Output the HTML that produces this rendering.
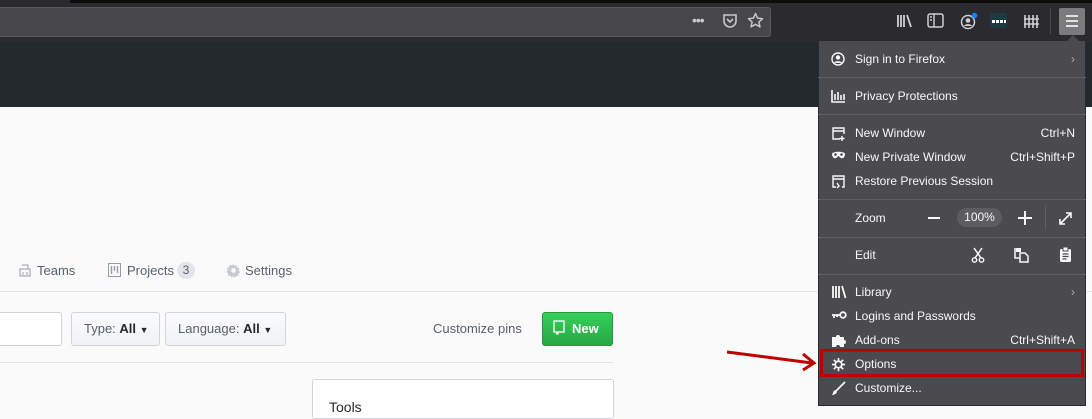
<!DOCTYPE html>
<html><head><meta charset="utf-8"><style>
*{box-sizing:border-box;margin:0;padding:0}
body{width:1092px;height:406px;overflow:hidden;position:relative;background:#fafafa;font-family:"Liberation Sans",sans-serif}
.abs{position:absolute}
.mi{position:absolute;left:818px;width:268px;height:24px;color:#f9f9fa;font-size:12px;line-height:24px;margin-top:1px}
.mi .t{position:absolute;left:37px}
.mi .k{position:absolute;right:11px}
.mi svg{position:absolute;left:13px;top:5px}
.sep{position:absolute;left:818px;width:268px;height:1px;background:#5f5f63}
.btn{position:absolute;top:312px;height:34px;border:1px solid #d1d5da;border-radius:3px;background:linear-gradient(#fafbfc,#eff3f6);font-size:13px;color:#586069;line-height:32px;padding-left:12px}
.btn b{color:#24292e}
.dot{position:absolute;width:3px;height:3px;background:#fff;top:20px}
</style></head><body>
<div class="abs" style="left:0;top:0;width:1092px;height:42px;background:#2b2a2f"></div>
<div class="abs" style="left:70px;top:0;width:1022px;height:3px;background:#0c0c0d"></div>
<div class="abs" style="left:0;top:7px;width:771px;height:30px;background:#474749;border:1px solid #5a5a5e;border-left:none;border-radius:0 3px 3px 0"></div>
<div class="abs" style="left:692px;top:12px;color:#c8c8cc;font-size:14px;letter-spacing:-1px">•••</div>
<svg class="abs" style="left:722px;top:13px" width="16" height="16" viewBox="0 0 16 16"><path d="M2 2h12v6a6 6 0 0 1-12 0z" fill="none" stroke="#c8c8cc" stroke-width="1.6"/><path d="M5 6l3 3 3-3" fill="none" stroke="#c8c8cc" stroke-width="1.6"/></svg>
<svg class="abs" style="left:747px;top:12px" width="17" height="17" viewBox="0 0 16 16"><path d="M8 1.5l2 4.3 4.6.5-3.4 3.1 1 4.6L8 11.6 3.8 14l1-4.6L1.4 6.3 6 5.8z" fill="none" stroke="#c8c8cc" stroke-width="1.4" stroke-linejoin="round"/></svg>
<svg class="abs" style="left:896px;top:13px" width="18" height="16" viewBox="0 0 18 16"><path d="M2 2v12M5 2v12M8 2v12M11 2l4 12" stroke="#d0d0d4" stroke-width="1.8" fill="none"/></svg>
<svg class="abs" style="left:927px;top:13px" width="17" height="15" viewBox="0 0 17 15"><rect x="1" y="1" width="15" height="13" rx="2" fill="none" stroke="#d0d0d4" stroke-width="1.5"/><path d="M7 1v13M3 4h2M3 7h2" stroke="#d0d0d4" stroke-width="1.4"/></svg>
<svg class="abs" style="left:960px;top:12px" width="18" height="18" viewBox="0 0 18 18"><circle cx="8" cy="10" r="6.5" fill="none" stroke="#d0d0d4" stroke-width="1.5"/><circle cx="8" cy="8.5" r="2.3" fill="#d0d0d4"/><path d="M4 14c1-2.5 7-2.5 8 0" fill="#d0d0d4"/><circle cx="14.5" cy="3.5" r="2.8" fill="#0a84ff"/></svg>
<div class="abs" style="left:990px;top:13px;width:17px;height:15px;background:#1c3a44"></div>
<div class="dot" style="left:992px"></div><div class="dot" style="left:996px"></div><div class="dot" style="left:1000px"></div><div class="dot" style="left:1004px;width:2px"></div>
<svg class="abs" style="left:1023px;top:13px" width="17" height="16" viewBox="0 0 17 16"><path d="M2 2v13M6 2v13M10 2v13M14 2v13M1 6h15M1 11h15" stroke="#d0d0d4" stroke-width="1.6"/></svg>
<div class="abs" style="left:1050px;top:8px;width:1px;height:26px;background:#4a4a4f"></div>
<div class="abs" style="left:1059px;top:8px;width:26px;height:27px;background:#7b7b7e;border-radius:2px"></div>
<svg class="abs" style="left:1064px;top:14px" width="16" height="14" viewBox="0 0 16 14"><path d="M2 2h12M2 7h12M2 12h12" stroke="#f0f0f0" stroke-width="1.8"/></svg>
<div class="abs" style="left:0;top:42px;width:1092px;height:65px;background:#24292e"></div>
<svg class="abs" style="left:19px;top:264px" width="12" height="13" viewBox="0 0 12 13"><rect x="1" y="5" width="10" height="7" fill="none" stroke="#959da5"/><path d="M3 1h6v4M4 8v3M8 8v3" stroke="#959da5" fill="none"/></svg>
<div class="abs" style="left:37px;top:263px;font-size:13px;color:#586069">Teams</div>
<svg class="abs" style="left:108px;top:263px" width="13" height="14" viewBox="0 0 13 14"><rect x="0.5" y="0.5" width="12" height="13" fill="none" stroke="#959da5"/><path d="M3.5 3v8M6.5 3v5M9.5 3v7" stroke="#959da5" stroke-width="1.4"/></svg>
<div class="abs" style="left:127px;top:263px;font-size:13px;color:#586069">Projects</div>
<div class="abs" style="left:177px;top:262px;width:18px;height:17px;background:#e1e4e8;border-radius:9px;font-size:12px;color:#586069;text-align:center;line-height:17px">3</div>
<svg class="abs" style="left:226px;top:263px" width="15" height="15" viewBox="0 0 16 16"><path d="M8 1l1.3 2.1 2.4-.6.5 2.4 2.3 1-.9 2.2 1.5 1.9-2 1.4.1 2.5-2.5-.1L9.3 16 8 14l-1.9 1.5-1.3-2.1-2.5.2.1-2.5-2-1.4L1.9 7.5 1 5.4l2.3-1 .5-2.4 2.4.6z" fill="#c6cbd1"/><circle cx="8" cy="8" r="2.5" fill="#fafafa"/></svg>
<div class="abs" style="left:245px;top:263px;font-size:13px;color:#586069">Settings</div>
<div class="abs" style="left:0;top:291px;width:1092px;height:1px;background:#e1e4e8"></div>
<div class="abs" style="left:-5px;top:312px;width:67px;height:34px;border:1px solid #d1d5da;border-radius:3px;background:#fff"></div>
<div class="btn" style="left:71px;width:89px">Type: <b>All</b> <span style="font-size:9px;color:#24292e">▼</span></div>
<div class="btn" style="left:165px;width:121px">Language: <b>All</b> <span style="font-size:9px;color:#24292e">▼</span></div>
<div class="abs" style="left:433px;top:321px;font-size:13px;color:#586069">Customize pins</div>
<div class="abs" style="left:542px;top:312px;width:71px;height:34px;background:linear-gradient(#34d058,#28a745);border:1px solid #26983f;border-radius:3px;color:#fff;font-weight:bold;font-size:13px;line-height:32px;padding-left:29px">New</div>
<svg class="abs" style="left:553px;top:320px" width="12" height="16" viewBox="0 0 12 16"><rect x="1" y="1" width="10" height="11" fill="none" stroke="#fff" stroke-width="1.3"/><path d="M3 12v3l1.3-1 1.3 1v-3" fill="#fff"/></svg>
<div class="abs" style="left:0;top:362px;width:613px;height:1px;background:#e1e4e8"></div>
<div class="abs" style="left:312px;top:379px;width:302px;height:40px;border:1px solid #d1d5da;border-radius:3px;background:#fff"></div>
<div class="abs" style="left:329px;top:399px;font-size:14px;color:#24292e">Tools</div>
<svg class="abs" style="left:720px;top:340px" width="100" height="35" viewBox="0 0 100 35"><path d="M7 12L92 23" stroke="#c00000" stroke-width="3"/><path d="M83 14L94 23 83 30" fill="none" stroke="#c00000" stroke-width="3"/></svg>
<div class="abs" style="left:818px;top:40px;width:268px;height:366px;background:#4a4a4f;border:1px solid #2a2a2e"></div>
<div class="abs" style="left:1067px;top:35px;width:0;height:0;border-left:6px solid transparent;border-right:6px solid transparent;border-bottom:6px solid #4a4a4f"></div>
<div class="mi" style="top:46px"><svg width="14" height="14" viewBox="0 0 14 14"><circle cx="7" cy="7" r="6" fill="none" stroke="#f9f9fa" stroke-width="1.4"/><circle cx="7" cy="5.5" r="2.2" fill="#f9f9fa"/><path d="M3 11c1-2.5 7-2.5 8 0" fill="#f9f9fa"/></svg><span class="t">Sign in to Firefox</span><span class="k" style="color:#b1b1b3">›</span></div>
<div class="sep" style="top:77px"></div>
<div class="mi" style="top:83px"><svg width="15" height="14" viewBox="0 0 15 14"><path d="M1 1v12h13M4 5v6M7 3v8M10 6v5M13 5v6" stroke="#f9f9fa" stroke-width="1.6" fill="none"/></svg><span class="t">Privacy Protections</span></div>
<div class="sep" style="top:114px"></div>
<div class="mi" style="top:120px"><svg width="15" height="15" viewBox="0 0 15 15"><path d="M9 13H2V2h11v6M2 5h11M11 10v5M8.5 12.5h5" stroke="#f9f9fa" stroke-width="1.4" fill="none"/></svg><span class="t">New Window</span><span class="k">Ctrl+N</span></div>
<div class="mi" style="top:144px"><svg width="15" height="12" viewBox="0 0 15 12"><path d="M1 4c0-3 13-3 13 0s-2 5-4 4-2-2-2.5-2-.5 1-2.5 2S1 7 1 4z" fill="#f9f9fa"/><circle cx="4.5" cy="4.5" r="1.3" fill="#4a4a4f"/><circle cx="10.5" cy="4.5" r="1.3" fill="#4a4a4f"/></svg><span class="t">New Private Window</span><span class="k">Ctrl+Shift+P</span></div>
<div class="mi" style="top:168px"><svg width="15" height="15" viewBox="0 0 15 15"><path d="M5 13H2V2h11v11h-2M2 5h11M6 9l2 3-2 2" stroke="#f9f9fa" stroke-width="1.4" fill="none"/></svg><span class="t">Restore Previous Session</span></div>
<div class="sep" style="top:199px"></div>
<div class="mi" style="top:205px"><span class="t">Zoom</span></div>
<div class="abs" style="left:928px;top:217px;width:12px;height:2px;background:#f9f9fa"></div>
<div class="abs" style="left:957px;top:208px;width:45px;height:19px;border-radius:10px;background:#5c5c61;color:#f9f9fa;font-size:12px;text-align:center;line-height:19px">100%</div>
<div class="abs" style="left:1018px;top:217px;width:14px;height:2px;background:#f9f9fa"></div>
<div class="abs" style="left:1024px;top:211px;width:2px;height:14px;background:#f9f9fa"></div>
<div class="abs" style="left:1045px;top:206px;width:1px;height:24px;background:#5f5f63"></div>
<svg class="abs" style="left:1058px;top:211px" width="15" height="15" viewBox="0 0 15 15"><path d="M2 13L13 2M8 2h5v5M2 8v5h5" stroke="#f9f9fa" stroke-width="1.6" fill="none"/></svg>
<div class="sep" style="top:237px"></div>
<div class="mi" style="top:242px"><span class="t">Edit</span></div>
<svg class="abs" style="left:971px;top:247px" width="14" height="16" viewBox="0 0 14 16"><path d="M3 1l7 10M11 1L4 11" stroke="#f9f9fa" stroke-width="1.5"/><circle cx="3.5" cy="13" r="2.2" fill="none" stroke="#f9f9fa" stroke-width="1.4"/><circle cx="10.5" cy="13" r="2.2" fill="none" stroke="#f9f9fa" stroke-width="1.4"/></svg>
<svg class="abs" style="left:1014px;top:247px" width="15" height="16" viewBox="0 0 15 16"><path d="M2 1h5v4H2z" fill="#f9f9fa"/><path d="M1 1v10h5" stroke="#f9f9fa" stroke-width="1.5" fill="none"/><path d="M6 6h5l3 3v6H6z" fill="none" stroke="#f9f9fa" stroke-width="1.5"/></svg>
<svg class="abs" style="left:1059px;top:246px" width="13" height="17" viewBox="0 0 13 17"><rect x="1" y="3" width="11" height="13" rx="1.5" fill="#f9f9fa"/><rect x="4" y="1" width="5" height="4" fill="#f9f9fa" stroke="#4a4a4f"/><path d="M3.5 8h6M3.5 10.5h6M3.5 13h4" stroke="#4a4a4f" stroke-width="1.2"/></svg>
<div class="sep" style="top:274px"></div>
<div class="mi" style="top:279px"><svg width="16" height="14" viewBox="0 0 16 14"><path d="M2 1v12M5 1v12M8 1v12M11 1l3.5 12" stroke="#f9f9fa" stroke-width="1.8" fill="none"/></svg><span class="t">Library</span><span class="k" style="color:#b1b1b3">›</span></div>
<div class="mi" style="top:303px"><svg width="16" height="12" viewBox="0 0 16 12"><path d="M1 6h8M3 6v3M6 6v2" stroke="#f9f9fa" stroke-width="1.8" fill="none"/><circle cx="12" cy="6" r="2.8" fill="none" stroke="#f9f9fa" stroke-width="1.8"/></svg><span class="t">Logins and Passwords</span></div>
<div class="mi" style="top:327px"><svg width="15" height="15" viewBox="0 0 15 15"><path d="M1 4h4a2 2 0 1 1 4 0h4v3a2 2 0 1 1 0 4v3H9a2 2 0 1 0-4 0H1z" fill="#f9f9fa"/></svg><span class="t">Add-ons</span><span class="k">Ctrl+Shift+A</span></div>
<div class="mi" style="top:351px"><svg width="15" height="15" viewBox="0 0 16 16"><path d="M8 1v3M8 12v3M1 8h3M12 8h3M3 3l2 2M11 11l2 2M3 13l2-2M11 5l2-2" stroke="#f9f9fa" stroke-width="1.8"/><circle cx="8" cy="8" r="3.5" fill="none" stroke="#f9f9fa" stroke-width="1.8"/></svg><span class="t">Options</span></div>
<div class="mi" style="top:375px"><svg width="15" height="15" viewBox="0 0 15 15"><path d="M14 1L5 10" stroke="#f9f9fa" stroke-width="1.8"/><path d="M5 9c-2 0-3 2-3 3l-1 2c2 0 4-1 5-3z" fill="#f9f9fa"/></svg><span class="t">Customize...</span></div>
<div class="abs" style="left:820px;top:349px;width:264px;height:28px;border:3px solid #c00000"></div>
</body></html>
